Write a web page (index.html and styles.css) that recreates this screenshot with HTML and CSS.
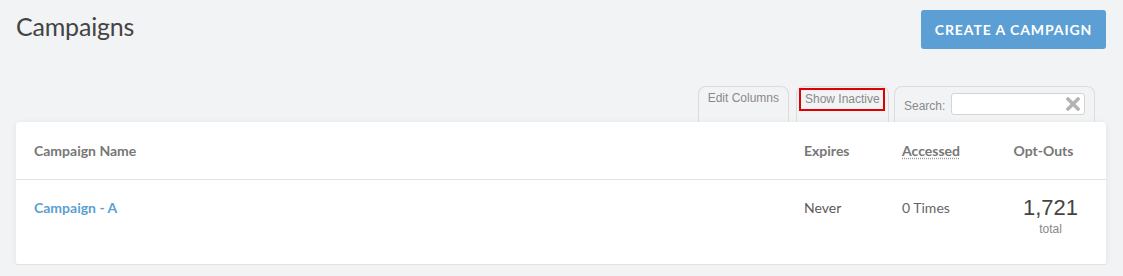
FILE: index.html
```html
<!DOCTYPE html>
<html lang="en">
<head>
    <meta charset="UTF-8">
    <title>Campaigns</title>
    <link rel="stylesheet" href="styles.css">
</head>
<body>
    <div class="page">
        <div class="page-header">
            <h1>Campaigns</h1>
            <button class="create-btn">CREATE A CAMPAIGN</button>
        </div>

        <div class="toolbar">
            <div class="tab">Edit Columns</div>
            <div class="tab inactive-tab"><span class="outlined">Show Inactive</span></div>
            <div class="tab search-tab">
                <label for="search">Search:</label>
                <div class="search-box">
                    <input id="search" type="text">
                    <svg class="clear" width="14" height="14" viewBox="0 0 14 14">
                        <path d="M2 2 L12 12 M12 2 L2 12" stroke="#b3b3b3" stroke-width="3.4" stroke-linecap="square"/>
                    </svg>
                </div>
            </div>
        </div>

        <div class="card">
            <div class="row head">
                <div>Campaign Name</div>
                <div>Expires</div>
                <div><span class="dotted">Accessed</span></div>
                <div class="center">Opt-Outs</div>
            </div>
            <div class="row">
                <div><a href="#">Campaign - A</a></div>
                <div>Never</div>
                <div class="light">0 Times</div>
                <div class="optouts">
                    <div class="count">
                        <div class="num">1,721</div>
                        <div class="sub">total</div>
                    </div>
                </div>
            </div>
        </div>
    </div>
</body>
</html>
```

FILE: styles.css
```css
body {
    margin: 0;
    background-color: #f2f3f5;
    font-family: Lato, "Noto Sans", sans-serif;
    color: #555;
}

.page {
    padding: 0 17px 0 16px;
}

.page-header {
    display: flex;
    justify-content: space-between;
    align-items: flex-start;
    padding-top: 10px;
}

.page-header h1 {
    margin: 0;
    padding-top: 1px;
    font-size: 25px;
    font-weight: 400;
    color: #444;
    letter-spacing: -0.2px;
}

.create-btn {
    background-color: #5b9fd4;
    color: #fff;
    border: none;
    border-radius: 3px;
    height: 39px;
    width: 185px;
    font-family: Lato, "Noto Sans", sans-serif;
    font-size: 14px;
    font-weight: 700;
    letter-spacing: 0.9px;
    cursor: pointer;
}

.toolbar {
    display: flex;
    justify-content: flex-end;
    margin-top: 37px;
    padding-right: 11px;
}

.tab {
    height: 36px;
    box-sizing: border-box;
    border: 1px solid #dcdcdc;
    border-bottom: none;
    border-radius: 8px 8px 0 0;
    padding: 4px 9px 0;
    font-family: "Liberation Sans", Arial, sans-serif;
    font-size: 12px;
    color: #8a8a8a;
    margin-left: 7px;
}

.inactive-tab {
    width: 93px;
    padding: 1px 0 0 2px;
}

.tab .outlined {
    display: inline-block;
    width: 86px;
    height: 23px;
    box-sizing: border-box;
    padding: 2px 0 0 4px;
    border: 2px solid #e00000;
}

.search-tab {
    display: flex;
    align-items: flex-start;
    gap: 6px;
    width: 201px;
    padding-top: 6px;
    margin-left: 5px;
}

.search-tab label {
    margin-top: 6px;
}

.search-box {
    position: relative;
}

.search-box input {
    width: 134px;
    height: 22px;
    box-sizing: border-box;
    border: 1px solid #d4d4d4;
    border-radius: 3px;
    background: #fff;
}

.search-box .clear {
    position: absolute;
    right: 5px;
    top: 4px;
}

.card {
    background: #fff;
    border-radius: 4px;
    box-shadow: 0 1px 6px rgba(0, 0, 0, 0.07);
}

.row {
    display: grid;
    grid-template-columns: 1fr 98px 97px 89px;
    padding: 0 18px;
    border-bottom: 1px solid #e2e2e2;
    font-size: 14px;
}

.row.head {
    height: 57px;
    align-items: center;
    font-weight: 700;
    color: #777;
}

.row:not(.head) {
    height: 85px;
    padding-top: 19px;
    box-sizing: border-box;
    color: #5a5a5a;
}

.row a {
    color: #5b9fd4;
    font-weight: 700;
    text-decoration: none;
}

.light {
    color: #666;
}

.dotted {
    text-decoration: underline dotted #999;
    text-underline-offset: 2px;
}

.center {
    text-align: center;
}

.optouts {
    text-align: right;
    padding-right: 10px;
}

.count {
    display: inline-block;
    text-align: center;
    font-family: "Liberation Sans", Arial, sans-serif;
    margin-top: -4px;
}

.count .num {
    font-size: 22px;
    color: #444;
}

.count .sub {
    font-size: 12px;
    color: #888;
    margin-top: 1px;
}
```
